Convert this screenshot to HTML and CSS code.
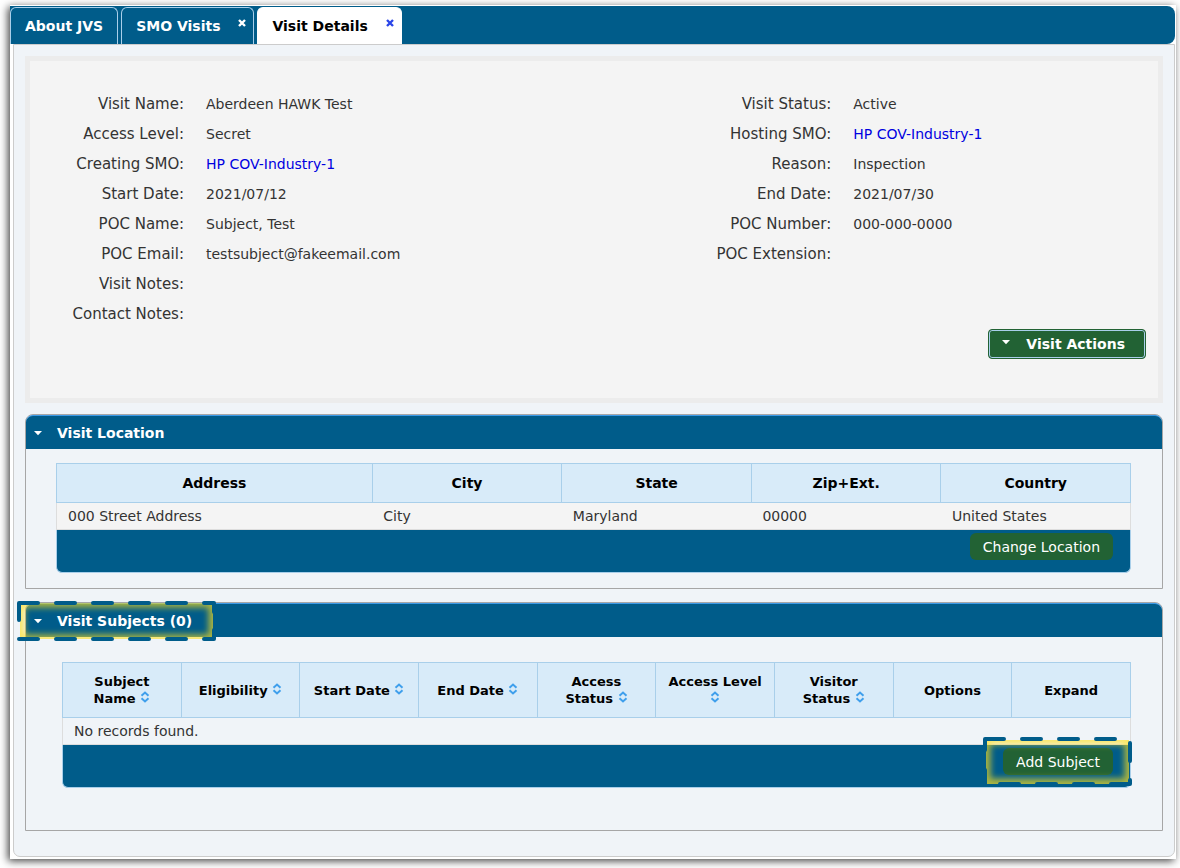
FILE: index.html
```html
<!DOCTYPE html>
<html lang="en">
<head>
<meta charset="utf-8">
<title>Visit Details</title>
<link rel="stylesheet" href="styles.css">
</head>
<body>
<svg class="defs" width="0" height="0" aria-hidden="true">
  <symbol id="sort" viewBox="0 0 10 12"><path d="M1.500 4.700 5 1.500l3.500 3.200M1.500 7.300 5 10.500l3.500-3.200" fill="none" stroke="#3f9fec" stroke-width="2"/></symbol>
  <symbol id="caret" viewBox="0 0 10 6"><path d="M1 1h8L5 5.200z" fill="currentColor"/></symbol>
  <symbol id="close" viewBox="0 0 8 8"><path d="M1 1l6 6M7 1L1 7" fill="none" stroke="currentColor" stroke-width="2.400"/></symbol>
</svg>
<main class="window">
  <nav class="tabs">
    <a class="tab" href="#about">About JVS</a>
    <div class="tab"><a href="#smo">SMO Visits</a><button class="close" aria-label="Close SMO Visits"><svg><use href="#close"/></svg></button></div>
    <div class="tab active"><a href="#details">Visit Details</a><button class="close" aria-label="Close Visit Details"><svg><use href="#close"/></svg></button></div>
  </nav>
  <div class="content">
    <section class="summary">
      <div class="facts">
        <dl>
          <dt>Visit Name:</dt><dd>Aberdeen HAWK Test</dd>
          <dt>Access Level:</dt><dd>Secret</dd>
          <dt>Creating SMO:</dt><dd><a href="#creating">HP COV-Industry-1</a></dd>
          <dt>Start Date:</dt><dd>2021/07/12</dd>
          <dt>POC Name:</dt><dd>Subject, Test</dd>
          <dt>POC Email:</dt><dd>testsubject@fakeemail.com</dd>
          <dt>Visit Notes:</dt><dd></dd>
          <dt>Contact Notes:</dt><dd></dd>
        </dl>
        <dl>
          <dt>Visit Status:</dt><dd>Active</dd>
          <dt>Hosting SMO:</dt><dd><a href="#hosting">HP COV-Industry-1</a></dd>
          <dt>Reason:</dt><dd>Inspection</dd>
          <dt>End Date:</dt><dd>2021/07/30</dd>
          <dt>POC Number:</dt><dd>000-000-0000</dd>
          <dt>POC Extension:</dt><dd></dd>
        </dl>
      </div>
      <button class="actions"><svg><use href="#caret"/></svg>Visit Actions</button>
    </section>

    <section class="panel">
      <h2><svg><use href="#caret"/></svg>Visit Location</h2>
      <div class="panel-body location">
        <table>
          <thead><tr><th class="address">Address</th><th>City</th><th>State</th><th>Zip+Ext.</th><th>Country</th></tr></thead>
          <tbody><tr><td>000 Street Address</td><td>City</td><td>Maryland</td><td>00000</td><td>United States</td></tr></tbody>
        </table>
        <div class="footer"><button class="green">Change Location</button></div>
      </div>
    </section>

    <section class="panel">
      <h2><svg><use href="#caret"/></svg>Visit Subjects (0)</h2>
      <svg class="mark mark-title" viewBox="0 0 199 40" aria-hidden="true">
        <defs><filter id="soft" x="-20%" y="-40%" width="140%" height="180%"><feGaussianBlur stdDeviation="3"/></filter>
        <clipPath id="clipA"><rect x="3" y="2" width="193" height="36"/></clipPath></defs>
        <g clip-path="url(#clipA)"><rect x="1" y="0" width="197" height="40" class="glow" filter="url(#soft)"/></g>
        <path d="M2 19V2H21M39 2h19M76 2h19M113 2h19M150 2h19M187 2h10v4M2 38h19M39 38h19M76 38h19M113 38h19M150 38h19M187 38h10v-4M197 6v5M197 29v6" class="dash"/>
      </svg>
      <div class="panel-body subjects">
        <table>
          <thead><tr>
            <th>Subject Name <svg><use href="#sort"/></svg></th>
            <th>Eligibility <svg><use href="#sort"/></svg></th>
            <th>Start Date <svg><use href="#sort"/></svg></th>
            <th>End Date <svg><use href="#sort"/></svg></th>
            <th>Access Status <svg><use href="#sort"/></svg></th>
            <th>Access Level <svg><use href="#sort"/></svg></th>
            <th>Visitor Status <svg><use href="#sort"/></svg></th>
            <th>Options</th>
            <th>Expand</th>
          </tr></thead>
          <tbody><tr><td colspan="9">No records found.</td></tr></tbody>
        </table>
        <div class="footer"><button class="green">Add Subject</button>
          <svg class="mark mark-add" viewBox="0 0 149 50" aria-hidden="true">
            <defs><clipPath id="clipB"><rect x="3" y="3" width="143" height="44"/></clipPath></defs>
            <g clip-path="url(#clipB)"><rect x="1" y="1" width="147" height="47" class="glow" filter="url(#soft)"/></g>
            <path d="M2 13V2H21M39 2h19M76 2h19M113 2h19M147 6v18M147 43v4h-19M110 47H91M73 47H54M36 47H17M2 47V33" class="dash"/>
          </svg>
        </div>
      </div>
    </section>
  </div>
</main>
</body>
</html>
```
FILE: styles.css
```css
* { box-sizing: border-box; }
body { margin: 0; padding: 5px 4px 9px 10px; background: #fff; font: 14px/18px Verdana, "DejaVu Sans", sans-serif; color: #333; }
button { font: inherit; border: 0; cursor: pointer; }
a { color: #0000e0; text-decoration: none; }
.defs { position: absolute; }
.window { padding: 1px 1px 2px 0; background: #fff; box-shadow: -2px 2px 8px rgba(0, 0, 0, .75); }
.tabs { display: flex; gap: 3px; height: 38px; padding: 1px 0 0 0; background: #005c8a; border-radius: 0 8px 8px 0; font-size: 14px; font-weight: bold; }
.tab { display: flex; padding: 9px 14px 0; border: 1px solid #a9cfea; border-bottom: 0; border-radius: 6px 6px 0 0; color: #fff; }
.tab a { color: inherit; }
.tab.active { background: #fff; color: #000; border-color: #fff; }
.close { align-self: flex-start; margin: 2px -7px 0 18px; padding: 0; background: none; color: #fff; line-height: 0; }
.close svg { width: 8px; height: 8px; }
.active .close { color: #2a45e8; }
.content { margin-left: 3px; padding: 11px 11px 25px; border: 1px solid #ccc; border-radius: 0 0 7px 7px; background: #f0f4f8; }
.summary { padding: 28px 12px 39px 0; border: 5px solid #ececec; background: #f4f4f4; }
.facts { display: grid; grid-template-columns: 58fr 42fr; }
dl { display: grid; grid-template-columns: 154px 1fr; grid-auto-rows: 30px; column-gap: 22px; align-content: start; margin: 0; line-height: 30px; }
dt { text-align: right; font-size: 15px; }
dd { margin: 0; }
.actions { display: block; margin-left: auto; padding: 4px 20px; border: 1px solid #226234; border-radius: 4px; box-shadow: inset 0 0 0 1px #a9cfea; background: #226234; color: #fff; font-weight: bold; line-height: 20px; }
.actions svg { width: 10px; height: 6px; margin: 0 15px 4px -8px; }
.panel { position: relative; margin-top: 11px; border: 1px solid #a6a6a6; border-radius: 8px 8px 0 0; }
.panel + .panel { margin-top: 13px; }
h2 { display: flex; align-items: center; gap: 14px; height: 34px; margin: 0; padding-left: 7px; border-top: 1px solid #3d9be9; border-radius: 7px 7px 0 0; background: #005c8a; color: #fff; font-size: 14px; }
h2 svg { width: 10px; height: 6px; }
.location { padding: 14px 31px 15px 30px; }
.subjects { padding: 25px 31px 42px 36px; }
table { width: 100%; border-collapse: collapse; table-layout: fixed; }
th { padding: 0 10px; height: 39px; border: 1px solid #a9cfea; background: #d8ebf9; color: #000; font-size: 14px; }
.address { width: 29.4%; }
td { height: 27px; padding: 0 11px; }
tbody tr { border: 1px solid #ddd; }
.location tbody { background: #f4f4f4; }
.subjects th { height: 55px; font-size: 13px; line-height: 17px; }
th svg { width: 10px; height: 12px; }
.footer { position: relative; height: 43px; padding: 3px 17px 0; border: 1px solid #a9cfea; border-top: 0; border-radius: 0 0 6px 6px; background: #005c8a; text-align: right; }
.green { height: 27px; padding: 0 13px; border-radius: 6px; background: #226234; color: #fff; }
.mark { position: absolute; pointer-events: none; }
.mark-title { left: -9px; top: -2px; width: 199px; height: 40px; }
.mark-add { right: -2px; top: -8px; width: 149px; height: 50px; }
.dash { fill: none; stroke: #005c8a; stroke-width: 4; stroke-linecap: round; stroke-linejoin: round; }
.glow { fill: none; stroke: #ffe01a; stroke-width: 13; opacity: .68; }
```
